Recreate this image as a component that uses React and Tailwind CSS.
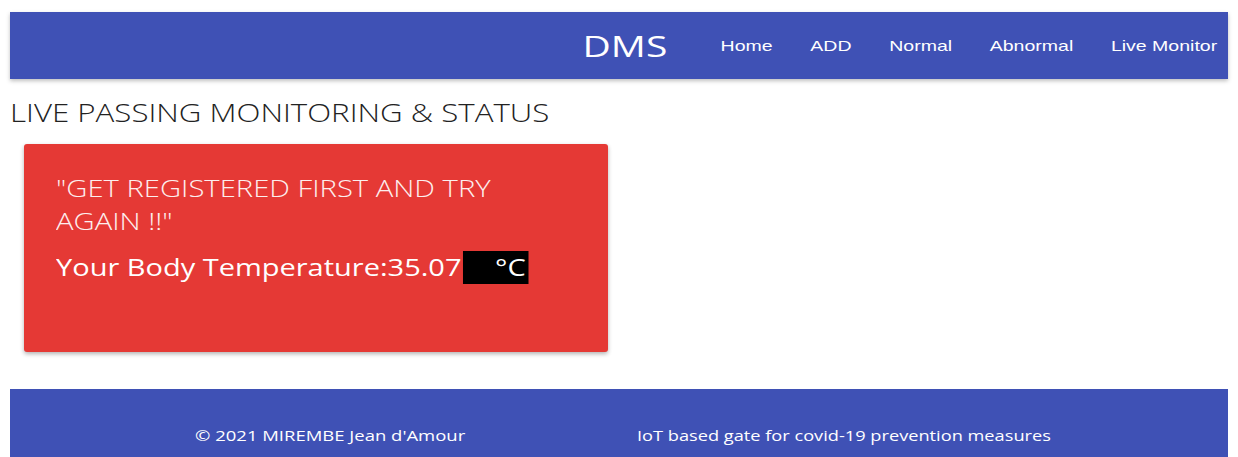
export default function App() {
  const links = ["Home", "ADD", "Normal", "Abnormal", "Live Monitor"];

  return (
    <div className="min-h-[457px] bg-white px-[10px] pt-[12px] font-['Open_Sans',sans-serif]">
      <nav className="flex h-[67px] items-center justify-end bg-[#3f51b5] pr-[11px] shadow-[0_2px_4px_rgba(0,0,0,0.25)]">
        <div className="flex origin-right scale-x-[1.3] items-center text-white">
          <span className="mr-[41px] text-[30px] leading-none">DMS</span>
          <ul className="flex gap-[29px] pt-[2px] font-['Liberation_Sans',sans-serif] text-[15px]">
            {links.map((l) => (
              <li key={l}>{l}</li>
            ))}
          </ul>
        </div>
      </nav>

      <h1 className="mt-[16px] text-[25px] font-light leading-[34px] text-[#222]">
        <span className="inline-block origin-left scale-x-[1.25]">LIVE PASSING MONITORING &amp; STATUS</span>
      </h1>

      <div className="ml-[14px] mt-[15px] h-[208px] w-[584px] rounded-[3px] bg-[#e53935] pl-[32px] pt-[28px] text-white shadow-[0_2px_4px_rgba(0,0,0,0.3)]">
        <p className="w-[375px] origin-left scale-x-[1.27] text-[23px] font-light leading-[33px] text-[#fdeeee]">
          "GET REGISTERED FIRST AND TRY AGAIN !!"
        </p>
        <p className="mt-[13px] flex origin-left scale-x-[1.26] items-center text-[23px] leading-[33px]">
          Your Body Temperature:35.07
          <span className="ml-[1px] inline-block h-[33px] w-[52px] bg-black pr-[2px] text-right">°C</span>
        </p>
      </div>

      <footer className="mt-[37px] flex h-[68px] items-end bg-[#3f51b5] pb-[11px] pl-[185px] text-[14px] text-white">
        <div className="w-[442px]">
          <span className="inline-block origin-left scale-x-[1.32]">© 2021 MIREMBE Jean d'Amour</span>
        </div>
        <span className="inline-block origin-left scale-x-[1.3]">IoT based gate for covid-19 prevention measures</span>
      </footer>
    </div>
  );
}
